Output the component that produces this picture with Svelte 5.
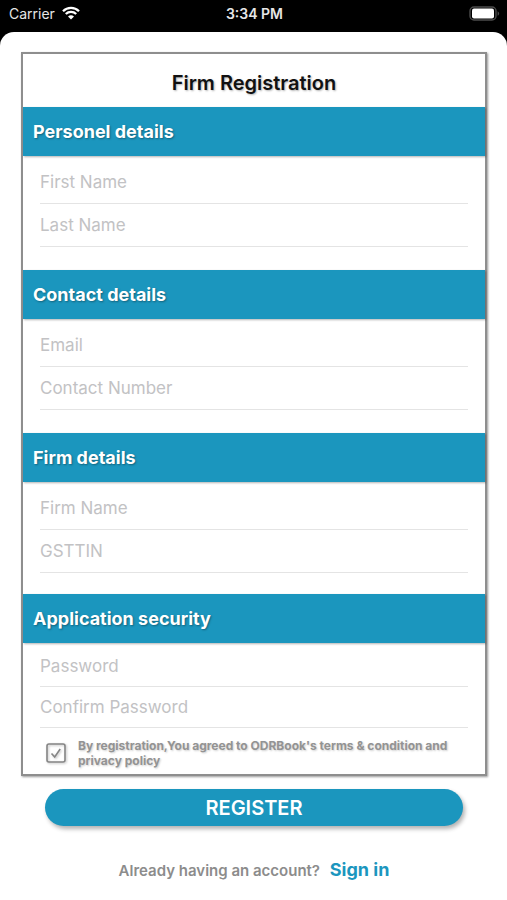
<script lang="ts">
    interface Field {
        id: string;
        label: string;
        type: string;
    }

    interface Section {
        title: string;
        compact?: boolean;
        fields: Field[];
    }

    const sections: Section[] = [
        {
            title: "Personel details",
            fields: [
                { id: "firstName", label: "First Name", type: "text" },
                { id: "lastName", label: "Last Name", type: "text" }
            ]
        },
        {
            title: "Contact details",
            fields: [
                { id: "email", label: "Email", type: "email" },
                { id: "contactNumber", label: "Contact Number", type: "tel" }
            ]
        },
        {
            title: "Firm details",
            fields: [
                { id: "firmName", label: "Firm Name", type: "text" },
                { id: "gsttin", label: "GSTTIN", type: "text" }
            ]
        },
        {
            title: "Application security",
            compact: true,
            fields: [
                { id: "password", label: "Password", type: "password" },
                { id: "confirmPassword", label: "Confirm Password", type: "password" }
            ]
        }
    ];

    let values: Record<string, string> = $state({});
    let agreed = $state(true);

    function register(event: SubmitEvent) {
        event.preventDefault();
    }
</script>

<div class="status-bar">
    <div class="carrier">
        <span>Carrier</span>
        <svg width="18" height="14" viewBox="0 0 18 14" aria-hidden="true">
            <path d="M1 5.2a11.4 11.4 0 0 1 16 0" />
            <path d="M3.8 8a7.4 7.4 0 0 1 10.4 0" />
            <path class="dot" d="M9 13.6 6 10.6a4.3 4.3 0 0 1 6 0z" />
        </svg>
    </div>
    <span class="time">3:34 PM</span>
    <div class="battery">
        <svg width="31" height="15" viewBox="0 0 31 15" aria-hidden="true">
            <rect x="1" y="1" width="26" height="13" rx="4" fill="none" stroke="#4c4c4c" stroke-width="1.4" />
            <rect x="3" y="2.6" width="22" height="9.8" rx="2" fill="#fff" />
            <path d="M28.6 5.2v4.6a2.5 2.5 0 0 0 0-4.6z" fill="#4c4c4c" />
        </svg>
    </div>
</div>

<main class="sheet">
    <form onsubmit={register}>
        <div class="card">
            <h1>Firm Registration</h1>

            {#each sections as section}
                <section class:compact={section.compact}>
                    <h2>{section.title}</h2>
                    <div class="fields">
                        {#each section.fields as field}
                            <input
                                id={field.id}
                                type={field.type}
                                placeholder={field.label}
                                aria-label={field.label}
                                bind:value={values[field.id]}
                            />
                        {/each}
                    </div>
                </section>
            {/each}

            <label class="terms">
                <input type="checkbox" bind:checked={agreed} />
                <svg width="20" height="20" viewBox="0 0 20 20" aria-hidden="true">
                    <rect x="1" y="1" width="18" height="18" rx="2" />
                    {#if agreed}
                        <path d="M5.5 10.5 8.7 14 14.2 6" />
                    {/if}
                </svg>
                <span>By registration,You agreed to ODRBook's terms &amp; condition and privacy policy</span>
            </label>
        </div>

        <button class="register" type="submit">REGISTER</button>
    </form>

    <p class="sign-in">
        Already having an account? <a href="#signin">Sign in</a>
    </p>
</main>

<style>
    :global(body) {
        background: #000;
        font-family: Inter, "Liberation Sans", sans-serif;
    }

    .status-bar {
        display: grid;
        grid-template-columns: 1fr auto 1fr;
        align-items: center;
        height: 32px;
        padding: 0 7px 6px 9px;
        box-sizing: border-box;
        background: #000;
        color: #e6e6e6;
        font-size: 14px;
    }

    .carrier {
        display: flex;
        align-items: center;
        gap: 7px;
    }

    .carrier path {
        fill: none;
        stroke: #fff;
        stroke-width: 2.3;
    }

    .carrier .dot {
        fill: #fff;
        stroke: none;
    }

    .time {
        font-weight: 600;
    }

    .battery {
        display: flex;
        justify-content: flex-end;
    }

    .sheet {
        min-height: calc(100vh - 32px);
        padding: 20px 20px 16px 21px;
        box-sizing: border-box;
        border-radius: 14px 14px 0 0;
        background: #fff;
    }

    .card {
        border: 2px solid #8e8e8e;
        box-shadow: 1px 1px 2px rgba(0, 0, 0, 0.4);
    }

    h1 {
        margin: 0;
        padding-top: 6px;
        font-size: 20px;
        font-weight: 600;
        line-height: 47px;
        text-align: center;
        color: #111;
        text-shadow: 1px 1px 2px rgba(0, 0, 0, 0.3);
    }

    h2 {
        margin: 0;
        padding: 0 10px;
        font-size: 18px;
        font-weight: 700;
        line-height: 49px;
        color: #fff;
        background: #1b96be;
        box-shadow: 1px 1px 2px rgba(0, 0, 0, 0.3);
        text-shadow: 1px 1px 2px rgba(0, 0, 0, 0.35);
    }

    .fields {
        display: flex;
        flex-direction: column;
        padding: 5px 17px 23px;
    }

    .fields input {
        width: 100%;
        height: 43px;
        padding: 0;
        box-sizing: border-box;
        border: 0;
        border-bottom: 1px solid #e4e4e4;
        border-radius: 0;
        outline: none;
        background: none;
        font-family: inherit;
        font-size: 17px;
        color: #333;
    }

    .fields input::placeholder {
        color: #c2c2c4;
        opacity: 1;
    }

    .compact {
        margin-top: -2px;
    }

    .compact .fields {
        padding: 3px 17px 0;
    }

    .compact .fields input {
        height: 41px;
    }

    .terms {
        display: flex;
        align-items: center;
        gap: 12px;
        padding: 10px 20px 6px 23px;
        font-size: 12px;
        font-weight: 700;
        line-height: 15px;
        color: #939393;
        text-shadow: 1px 1px 2px rgba(0, 0, 0, 0.2);
    }

    .terms input {
        position: absolute;
        opacity: 0;
    }

    .terms svg {
        flex: none;
        fill: none;
        stroke: #858585;
        stroke-width: 1.6;
        filter: drop-shadow(1px 1px 1px rgba(0, 0, 0, 0.25));
    }

    .register {
        display: block;
        width: calc(100% - 48px);
        height: 37px;
        margin: 13px 24px 0;
        border: 0;
        border-radius: 19px;
        background: #1b96be;
        box-shadow: 2px 3px 4px rgba(0, 0, 0, 0.3);
        font-family: inherit;
        font-size: 20px;
        font-weight: 600;
        color: #fff;
        cursor: pointer;
    }

    .sign-in {
        margin: 32px 0 0;
        font-size: 15px;
        font-weight: 600;
        line-height: 24px;
        text-align: center;
        color: #8c8c8c;
    }

    .sign-in a {
        margin-left: 6px;
        font-size: 18px;
        font-weight: 700;
        color: #1b96be;
        text-decoration: none;
    }
</style>
